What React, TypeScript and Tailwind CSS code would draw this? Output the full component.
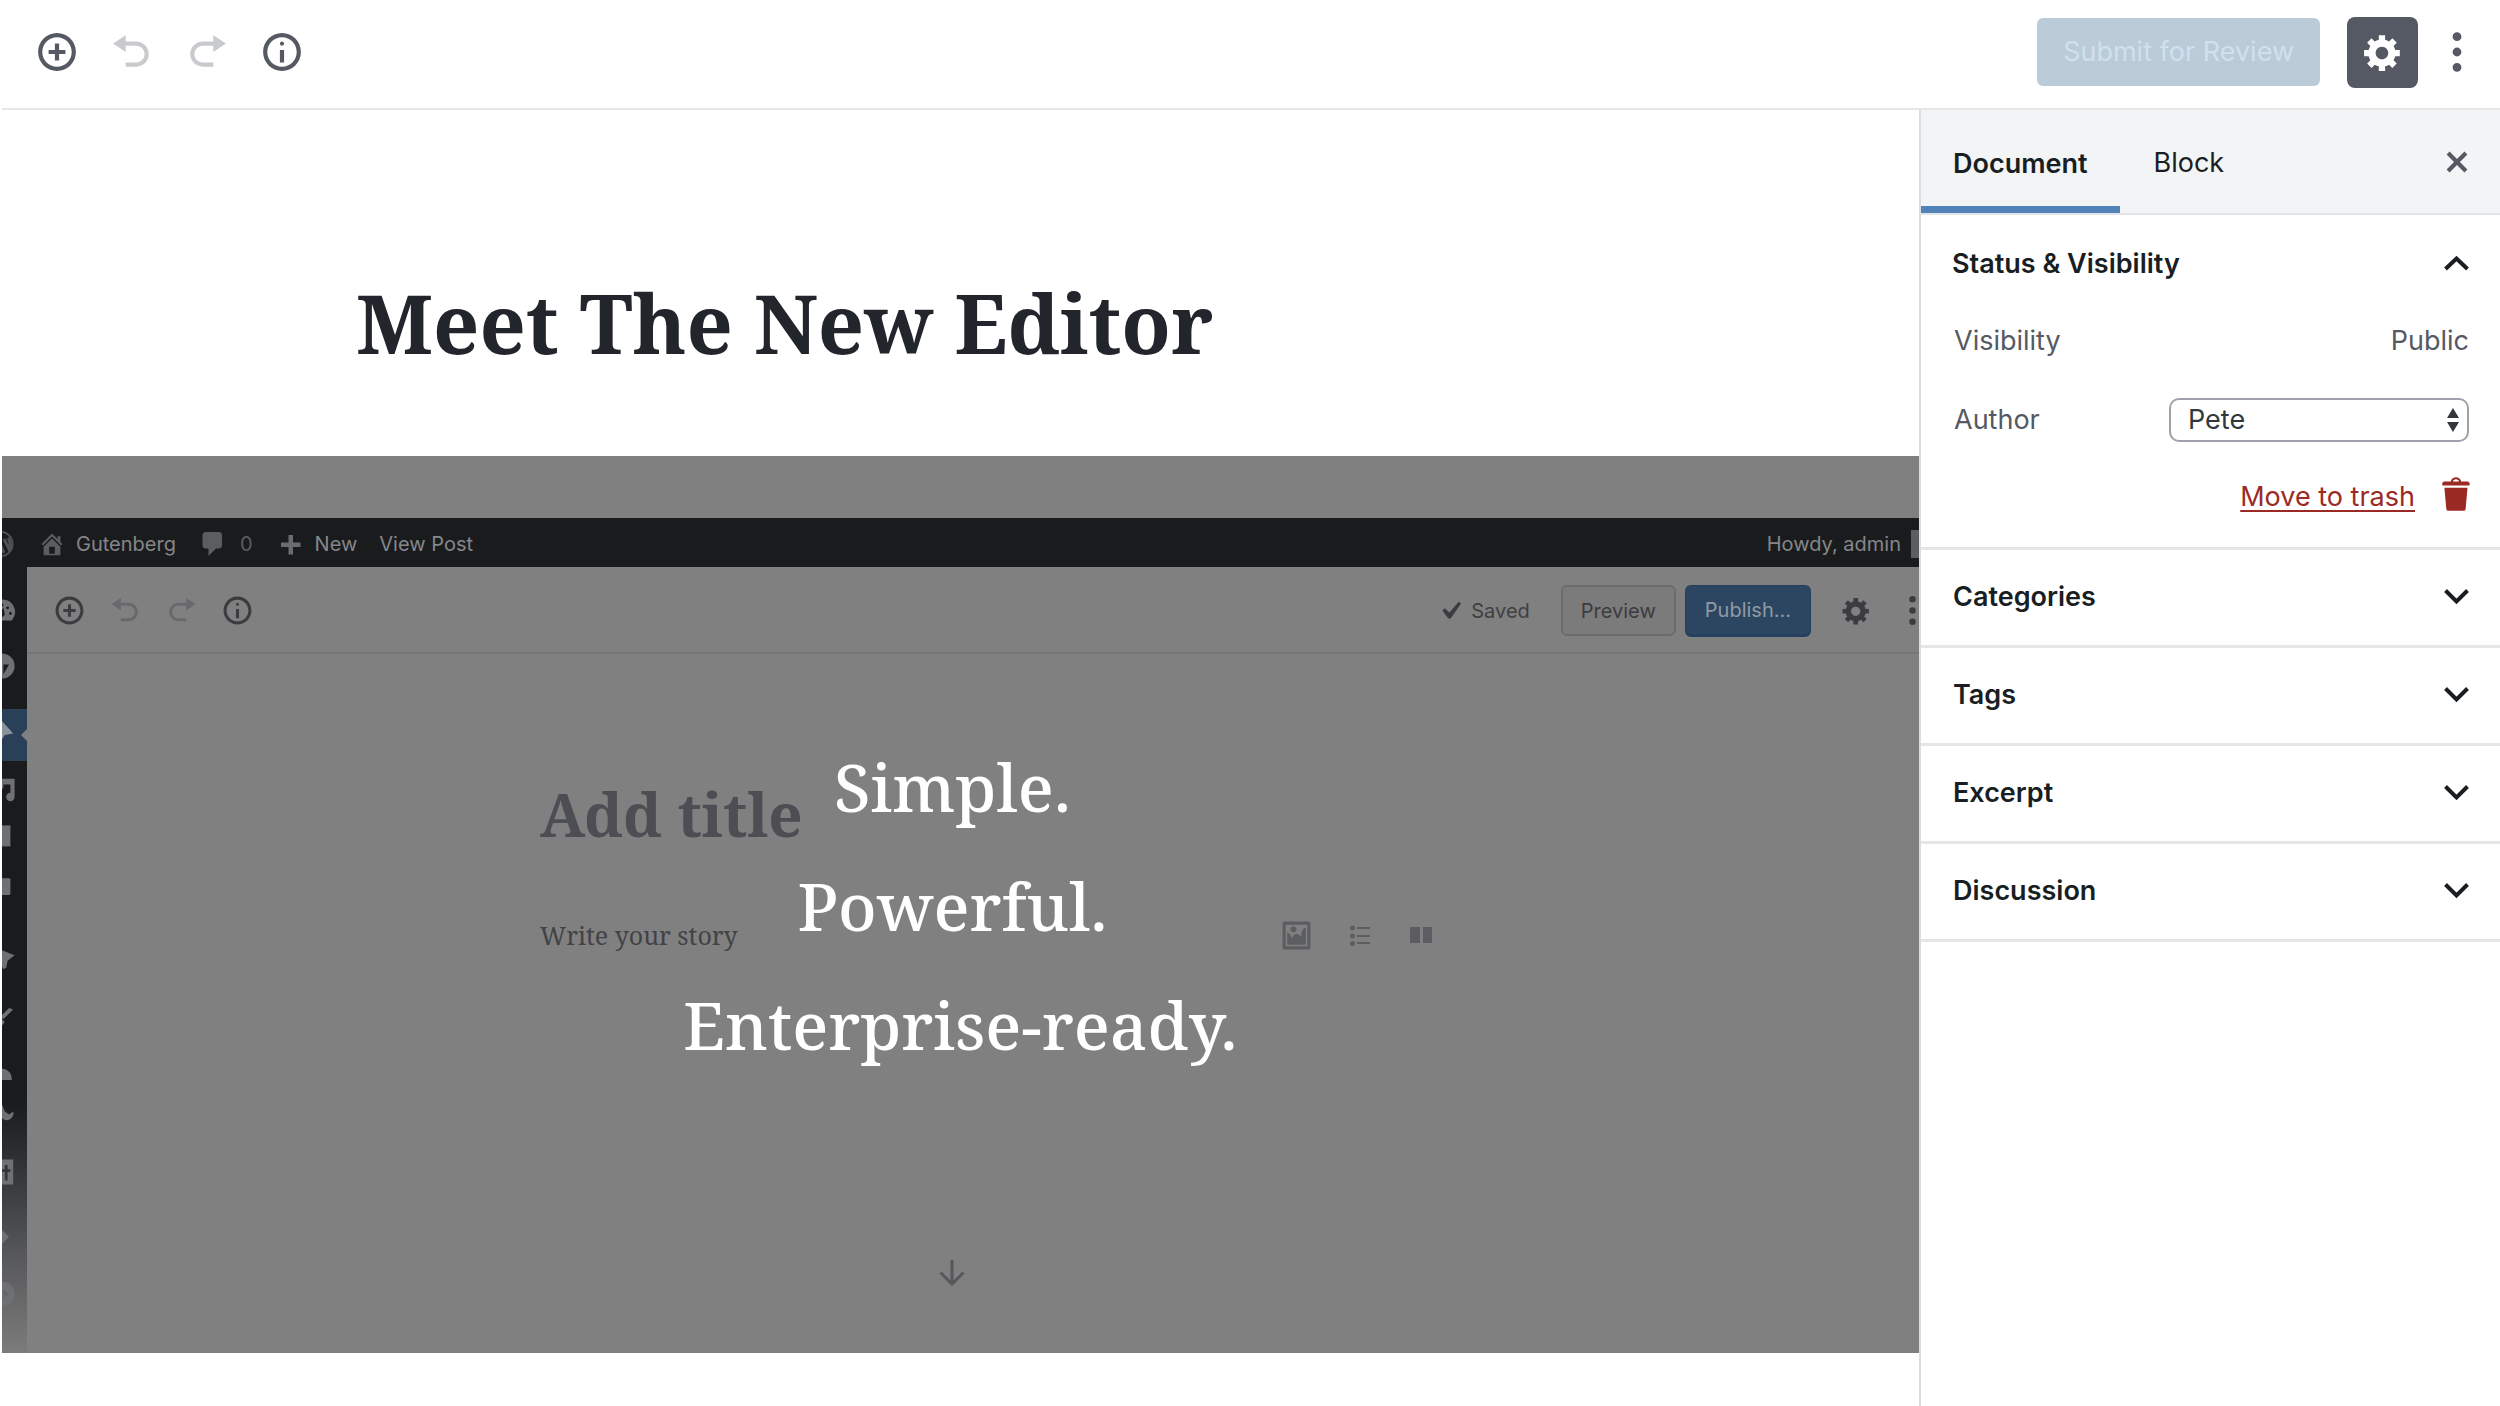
import { useState, type ReactNode } from "react";

const GEAR =
  "M18 12h-2.18c-.17.7-.44 1.35-.81 1.93l1.54 1.54-2.1 2.1-1.54-1.54c-.58.36-1.23.63-1.91.79V19H8v-2.18c-.68-.16-1.33-.43-1.91-.79l-1.54 1.54-2.12-2.12 1.54-1.54c-.36-.58-.63-1.23-.79-1.91H1V9.03h2.17c.16-.7.44-1.35.8-1.94L2.43 5.55l2.1-2.1 1.54 1.54c.58-.37 1.24-.64 1.93-.81V2h3v2.18c.68.16 1.33.43 1.91.79l1.54-1.54 2.12 2.12-1.54 1.54c.36.59.64 1.24.8 1.94H18V12zm-8.5 1.5c1.66 0 3-1.34 3-3s-1.34-3-3-3-3 1.34-3 3 1.34 3 3 3z";
const INSERT =
  "M10 1c-5 0-9 4-9 9s4 9 9 9 9-4 9-9-4-9-9-9zm0 16c-3.9 0-7-3.1-7-7s3.1-7 7-7 7 3.1 7 7-3.1 7-7 7zm1-11H9v3H6v2h3v3h2v-3h3V9h-3V6z";
const UNDO = "M12 5H7V2L1 6l6 4V7h5c2.2 0 4 1.8 4 4s-1.8 4-4 4H7v2h5c3.3 0 6-2.7 6-6s-2.7-6-6-6z";
const REDO = "M8 5h5V2l6 4-6 4V7H8c-2.2 0-4 1.8-4 4s1.8 4 4 4h5v2H8c-3.3 0-6-2.7-6-6s2.7-6 6-6z";
const INFO =
  "M9 15h2V9H9v6zm1-10c-.5 0-1 .5-1 1s.5 1 1 1 1-.5 1-1-.5-1-1-1zm0-4c-5 0-9 4-9 9s4 9 9 9 9-4 9-9-4-9-9-9zm0 16c-3.9 0-7-3.1-7-7s3.1-7 7-7 7 3.1 7 7-3.1 7-7 7z";
const DOTS =
  "M10 .6a2.1 2.1 0 1 1 0 4.2 2.1 2.1 0 0 1 0-4.2zm0 7.3a2.1 2.1 0 1 1 0 4.2 2.1 2.1 0 0 1 0-4.2zm0 7.3a2.1 2.1 0 1 1 0 4.2 2.1 2.1 0 0 1 0-4.2z";
const CLOSE =
  "M14.95 6.46L11.41 10l3.54 3.54-1.41 1.41L10 11.42l-3.53 3.53-1.42-1.42L8.58 10 5.05 6.47l1.42-1.42L10 8.58l3.54-3.53z";
const TRASH =
  "M12 4h3c.6 0 1 .5 1 1v1H3V5c0-.6.5-1 1-1h3c.2-1.1 1.3-2 2.5-2s2.3.9 2.5 2zM8 4h3c-.2-.6-.9-1-1.5-1S8.2 3.4 8 4zM4 7h11l-.9 10.1c0 .5-.5.9-1 .9H5.9c-.5 0-.9-.4-1-.9L4 7z";
const CHECK = "M14.83 4.89l1.34.94-5.81 8.38H9.02L5.78 9.67l1.34-1.25 2.57 2.4z";
const HOME =
  "M16 8.5l1.53 1.53-1.06 1.06L10 4.6l-6.47 6.49-1.06-1.06L10 2.5l4 4v-2h2v4zm-6-2.46l6 5.99V18H4v-5.97zM12 17v-5H8v5h4z";
const COMMENT =
  "M5 2h9q.82 0 1.41.59T16 4v7q0 .82-.59 1.41T14 13h-2l-5 5v-5H5q-.82 0-1.41-.59T3 11V4q0-.82.59-1.41T5 2z";
const PLUS = "M17 9v3h-5v5H9v-5H4V9h5V4h3v5h5z";
const IMAGE =
  "M2.25 1h15.5c.69 0 1.25.56 1.25 1.25v15.5c0 .69-.56 1.25-1.25 1.25H2.25C1.56 19 1 18.44 1 17.75V2.25C1 1.56 1.56 1 2.25 1zM17 17V3H3v14h14zM10 6c0-1.1-.9-2-2-2s-2 .9-2 2 .9 2 2 2 2-.9 2-2zm3 5s0-6 3-6v10c0 .55-.45 1-1 1H5c-.55 0-1-.45-1-1V8c2 0 3 4 3 4s1-3 3-3 3 2 3 2z";

function Icon({ d, className }: { d: string; className: string }) {
  return (
    <svg viewBox="0 0 20 20" fill="currentColor" fillRule="evenodd" aria-hidden="true" className={`shrink-0 ${className}`}>
      <path d={d} />
    </svg>
  );
}

function IconButton({ label, d, size, className = "" }: { label: string; d: string; size: string; className?: string }) {
  return (
    <button type="button" aria-label={label} className={`block ${className}`}>
      <Icon d={d} className={size} />
    </button>
  );
}

function TopBar() {
  return (
    <header className="ml-0.5 flex h-[110px] shrink-0 items-center justify-between border-b-2 border-[#e5e6e8] pb-1 pl-[34px] pr-[22px] text-[#555963]">
      <div className="flex items-center gap-[33px]">
        <IconButton label="Add block" d={INSERT} size="size-[42px]" />
        <IconButton label="Undo" d={UNDO} size="size-[42px]" className="text-[#c9cacd]" />
        <IconButton label="Redo" d={REDO} size="size-[42px]" className="text-[#c9cacd]" />
        <IconButton label="Content structure" d={INFO} size="size-[42px]" />
      </div>
      <div className="flex items-center">
        <button type="button" className="h-[68px] rounded-md bg-[#bbccd8] px-[26px] text-[27px] text-[#cfe1ee]">
          Submit for Review
        </button>
        <button
          type="button"
          aria-label="Settings"
          className="ml-[27px] mr-[18px] flex size-[71px] items-center justify-center rounded-lg bg-[#555963] text-white"
        >
          <Icon d={GEAR} className="size-[42px]" />
        </button>
        <IconButton label="More options" d={DOTS} size="size-[42px]" />
      </div>
    </header>
  );
}

const RAIL_ICONS: { name: string; gap: string; shape: ReactNode }[] = [
  {
    name: "Dashboard",
    gap: "mt-[31px]",
    shape: (
      <path d="M10 1a9 9 0 0 0-7 15h14a9 9 0 0 0-7-15zm0 3a1 1 0 1 1 0 2 1 1 0 0 1 0-2zm4 2a1 1 0 1 1 0 2 1 1 0 0 1 0-2zm2 4a1 1 0 1 1 0 2 1 1 0 0 1 0-2zm-7 0l2-3 1 5-2 2z" />
    ),
  },
  { name: "Jetpack", gap: "mt-[26px]", shape: <path d="M10 1a9 9 0 1 1 0 18 9 9 0 0 1 0-18zm1 8v7l4-7z" /> },
  { name: "Posts", gap: "", shape: <path d="M10 0l8 9-6 1-4 6-2-5z" /> },
  { name: "Media", gap: "mt-[15px]", shape: <path d="M9 2h10v13a3 3 0 1 1-3-3V6h-5v3H9z" /> },
  { name: "Pages", gap: "mt-5", shape: <path d="M5 1h11v15H5z" /> },
  { name: "Comments", gap: "mt-[22px]", shape: <path d="M4 3h11q1 0 1 1v10q0 1-1 1H4z" /> },
  { name: "Feedback", gap: "mt-[42px]", shape: <path d="M9 4l10 4-5 4-1 5-2 1-3-5z" /> },
  { name: "Appearance", gap: "mt-[29px]", shape: <path d="M18 6l-7 7-2-2 6-6zM9 12l3 3-3 4-4-1z" /> },
  { name: "Users", gap: "mt-[30px]", shape: <path d="M3 15c0-6 3-8 7-8s7 3 7 8z" /> },
  { name: "Tools", gap: "mt-3", shape: <path d="M10 4l2 5 3 2 3-2c1 4-3 7-6 6L3 9z" /> },
  { name: "Settings", gap: "mt-[31px]", shape: <path d="M3 1h15v18H3zm9 4v3h-2v2h2v6h2v-6h2V8h-2V5z" /> },
  { name: "Add-ons", gap: "mt-[37px]", shape: <path d="M8 3l7 7-7 7-3-3z" /> },
  { name: "Collapse menu", gap: "mt-[29px]", shape: <path d="M10 1a9 9 0 1 1 0 18 9 9 0 0 1 0-18zm1 6v6l4-3z" /> },
];

function AdminRail() {
  return (
    <nav
      aria-label="Admin menu"
      className="w-[25px] shrink-0 overflow-hidden bg-linear-to-b from-[#1a1b1d] from-68% via-[#555658] via-87% to-[#7c7c7c] text-[#6f7072]"
    >
      {RAIL_ICONS.map(({ name, gap, shape }) => {
        const glyph = (
          <svg viewBox="0 0 20 20" fill="currentColor" fillRule="evenodd" role="img" aria-label={name} className="-ml-3.5 size-7">
            {shape}
          </svg>
        );
        return name === "Posts" ? (
          <div key={name} className="mt-[29px] flex h-[52px] items-center justify-between bg-[#2a4059] text-[#8a929b]">
            {glyph}
            <svg viewBox="0 0 6 12" aria-hidden="true" className="h-3 w-1.5 shrink-0 text-[#808080]">
              <path d="M6 0v12L0 6z" fill="currentColor" />
            </svg>
          </div>
        ) : (
          <div key={name} className={gap}>
            {glyph}
          </div>
        );
      })}
    </nav>
  );
}

function AdminBar() {
  return (
    <div className="flex h-[49px] shrink-0 items-center overflow-hidden bg-[#1a1b1d] pt-0.5 text-xl text-[#85878a]">
      <svg viewBox="0 0 28 28" fill="none" stroke="#515254" strokeWidth="2" aria-hidden="true" className="-ml-4 size-7 shrink-0">
        <circle cx="14" cy="14" r="12.5" />
        <path d="M4 9l6 15 4-10M12 9l6 14M18 9l5 10c2-4 1-8-1-11" strokeWidth="3" />
      </svg>
      <Icon d={HOME} className="ml-6 size-[28px] text-[#5b5d5f]" />
      <span className="ml-[10px]">Gutenberg</span>
      <Icon d={COMMENT} className="ml-[22px] size-[30px] text-[#5b5d5f]" />
      <span className="ml-3 text-[#5b5d5f]">0</span>
      <Icon d={PLUS} className="ml-[22px] size-[30px] text-[#6a6c6e]" />
      <span className="ml-[10px]">New</span>
      <span className="ml-[22px]">View Post</span>
      <span className="ml-auto">Howdy, admin</span>
      <span className="ml-2.5 h-7 w-2 bg-[#5b5d5f]" />
    </div>
  );
}

function InnerToolbar() {
  return (
    <div className="flex h-[87px] shrink-0 items-center justify-between overflow-hidden border-b-2 border-[#757575] pt-0.5 text-[#3b3c40]">
      <div className="flex items-center gap-[25px] pl-[27px]">
        <IconButton label="Add block in preview" d={INSERT} size="size-[31px]" />
        <IconButton label="Undo in preview" d={UNDO} size="size-[31px]" className="text-[#68696c]" />
        <IconButton label="Redo in preview" d={REDO} size="size-[31px]" className="text-[#68696c]" />
        <IconButton label="Preview structure" d={INFO} size="size-[31px]" />
      </div>
      <div className="-mr-[9px] flex items-center text-xl">
        <Icon d={CHECK} className="size-[36px]" />
        <span className="ml-[3px] text-[#3f4043]">Saved</span>
        <button type="button" className="ml-[31px] h-[51px] rounded-md border-2 border-[#6c6c6c] bg-[#7b7b7b] px-[18px] text-[#3b3c40]">
          Preview
        </button>
        <button type="button" className="ml-[9px] h-[52px] rounded-md border border-b-3 border-[#24405e] bg-[#2c4661] px-[19px] text-[#8e99a5]">
          Publish…
        </button>
        <IconButton label="Preview settings" d={GEAR} size="size-[31px]" className="ml-[30px]" />
        <IconButton label="More preview options" d={DOTS} size="size-[31px]" className="ml-[25px]" />
      </div>
    </div>
  );
}

function Cover() {
  return (
    <section className="relative ml-0.5 flex h-[897px] flex-col bg-[#808080] pt-[62px] font-['Inter',sans-serif]">
      <AdminBar />
      <div className="flex min-h-0 flex-1">
        <AdminRail />
        <div className="flex min-w-0 flex-1 flex-col">
          <InnerToolbar />
          <div className="ml-[513px] mt-[118px] w-[892px] font-['Noto_Serif',serif]">
            <p className="text-[60px] leading-[84px] font-bold text-[#4c4e54]">Add title</p>
            <div className="mt-[61px] flex items-center justify-between">
              <p className="text-[25px] leading-9 text-[#424347]">Write your story</p>
              <div className="flex items-center text-[#5c5d60]">
                <Icon d={IMAGE} className="size-[31px]" />
                <svg viewBox="0 0 20 21" aria-hidden="true" className="ml-[38px] h-[21px] w-5">
                  <path d="M7 3h13M7 11h13M7 18h13" stroke="currentColor" strokeWidth="2" />
                  <g fill="currentColor">
                    <circle cx="2.5" cy="3" r="2.5" />
                    <circle cx="2.5" cy="11" r="2.5" />
                    <circle cx="2.5" cy="18.5" r="2.5" />
                  </g>
                </svg>
                <svg viewBox="0 0 22 16" fill="currentColor" aria-hidden="true" className="ml-10 h-4 w-[22px]">
                  <path d="M0 0h10v16H0zM13 0h9v16h-9z" />
                </svg>
              </div>
            </div>
          </div>
        </div>
      </div>
      <div className="absolute inset-x-0 top-[271px] text-center font-['Noto_Serif',serif] text-[66px] leading-[119px] font-medium text-white">
        <p className="pr-4">Simple.</p>
        <p className="pr-4">Powerful.</p>
        <p>Enterprise-ready.</p>
      </div>
      <svg
        viewBox="0 0 26 26"
        fill="none"
        stroke="#56575b"
        strokeWidth="3"
        aria-hidden="true"
        className="absolute bottom-[67px] left-1/2 -ml-[22px] size-[26px]"
      >
        <path d="M13 0v23M1.500 12.500L13 24l11.500-11.500" />
      </svg>
    </section>
  );
}

function Chevron({ open = false }: { open?: boolean }) {
  return (
    <svg viewBox="0 0 25 16" fill="none" stroke="currentColor" strokeWidth="4" aria-hidden="true" className="h-4 w-[25px] shrink-0">
      <path d={open ? "M1.500 13L12.500 2.500l11 10.500" : "M1.500 1.500l11 11 11-11"} />
    </svg>
  );
}

function Panel({ title }: { title: string }) {
  return (
    <section className="border-b-3 border-[#e5e6e8]">
      <button type="button" aria-expanded="false" className="flex h-[95px] w-full items-center justify-between pl-8 pr-[31px]">
        <span>{title}</span>
        <Chevron />
      </button>
    </section>
  );
}

function Sidebar() {
  const [author, setAuthor] = useState("Pete");
  return (
    <aside className="w-[581px] shrink-0 border-l-2 border-[#dcdde0] text-[27px] text-[#191e23]">
      <div className="flex h-[105px] items-stretch border-b-2 border-[#e2e4e7] bg-[#f3f4f5]">
        <button type="button" className="border-b-7 border-[#5183b8] px-8 pt-3 font-semibold">
          Document
        </button>
        <button type="button" className="px-[34px] pt-1">
          Block
        </button>
        <IconButton label="Close settings" d={CLOSE} size="size-[42px]" className="ml-auto mr-[22px] text-[#555963]" />
      </div>
      <section className="border-b-3 border-[#e5e6e8] pb-[29px] pl-[33px] pr-[31px] text-[#555963]">
        <h2 className="-ml-0.5 text-[#191e23]">
          <button type="button" aria-expanded="true" className="flex h-[98px] w-full items-center justify-between font-semibold">
            <span>Status &amp; Visibility</span>
            <Chevron open />
          </button>
        </h2>
        <div className="flex h-14 items-center justify-between">
          <span>Visibility</span>
          <button type="button">Public</button>
        </div>
        <div className="mt-[29px] flex h-11 items-center justify-between">
          <label htmlFor="author">Author</label>
          <div className="relative w-[300px]">
            <select
              id="author"
              value={author}
              onChange={(e) => setAuthor(e.target.value)}
              className="h-11 w-full appearance-none rounded-[10px] border-2 border-[#a0a2ab] bg-white px-[17px] text-[#32373c]"
            >
              <option>Pete</option>
            </select>
            <svg viewBox="0 0 12 24" fill="#32373c" aria-hidden="true" className="pointer-events-none absolute right-[10px] top-[10px] h-6 w-3">
              <path d="M6 0l6 10H0zM6 24L0 14h12z" />
            </svg>
          </div>
        </div>
        <div className="mt-[29px] flex items-center justify-end gap-[21px] text-[#9c2a24]">
          <a href="#trash" className="pt-1.5 underline decoration-2 underline-offset-4">
            Move to trash
          </a>
          <Icon d={TRASH} className="-mr-[9px] size-[42px]" />
        </div>
      </section>
      <div className="font-semibold">
        <Panel title="Categories" />
        <Panel title="Tags" />
        <Panel title="Excerpt" />
        <Panel title="Discussion" />
      </div>
    </aside>
  );
}

export default function App() {
  return (
    <div className="flex min-h-screen flex-col bg-white font-['Inter',sans-serif]">
      <TopBar />
      <div className="flex flex-1">
        <main className="min-w-0 flex-1">
          <h1 className="pb-[78px] pl-[356px] pt-[158px] font-['Noto_Serif',serif] text-[81px] leading-[110px] font-bold text-[#23252c]">
            Meet The New Editor
          </h1>
          <Cover />
        </main>
        <Sidebar />
      </div>
    </div>
  );
}
